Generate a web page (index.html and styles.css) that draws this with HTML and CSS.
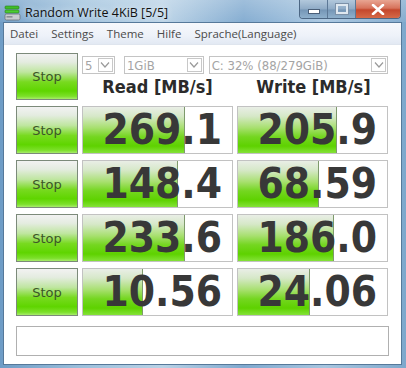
FILE: index.html
```html
<!DOCTYPE html>
<html>
<head>
<meta charset="utf-8">
<link rel="stylesheet" href="styles.css">
</head>
<body>
<div class="window">
  <div class="titlebar">
    <svg class="appicon" width="17" height="17" viewBox="0 0 17 17">
      <rect x="1" y="1" width="14" height="3" rx="1" fill="#3fbf2a" stroke="#2a7a1c" stroke-width="0.6"/>
      <rect x="1" y="5" width="14" height="3" rx="1" fill="#4ccc33" stroke="#2a7a1c" stroke-width="0.6"/>
      <rect x="1" y="9" width="15" height="6" rx="1.5" fill="#c9ccd0" stroke="#6d7278" stroke-width="0.8"/>
      <rect x="2.5" y="11" width="6" height="1.6" fill="#8a9096"/>
    </svg>
    <span class="title">Random Write 4KiB [5/5]</span>
    <div class="caption">
      <div class="cbtn minbtn"><span class="minglyph"></span></div>
      <div class="cbtn maxbtn"><span class="maxglyph"></span></div>
      <div class="cbtn closebtn">
        <svg width="14" height="11" viewBox="0 0 14 11"><path d="M2 1 L12 10 M12 1 L2 10" stroke="#fff" stroke-width="2.6" stroke-linecap="round"/></svg>
      </div>
    </div>
  </div>
  <div class="client">
    <div class="menubar">
      <span class="mi">Datei</span>
      <span class="mi">Settings</span>
      <span class="mi">Theme</span>
      <span class="mi">Hilfe</span>
      <span class="mi">Sprache(Language)</span>
    </div>
    <div class="main">
      <div class="grid">
        <div class="stop">Stop</div>
        <div class="header">
          <div class="selects">
            <div class="sel s1"><span class="sv">5</span><span class="arr"><svg width="10" height="6" viewBox="0 0 10 6"><path d="M1 0.5 L5 5 L9 0.5" fill="none" stroke="#9a9a9a" stroke-width="1.2"/></svg></span></div>
            <div class="sel s2"><span class="sv">1GiB</span><span class="arr"><svg width="10" height="6" viewBox="0 0 10 6"><path d="M1 0.5 L5 5 L9 0.5" fill="none" stroke="#9a9a9a" stroke-width="1.2"/></svg></span></div>
            <div class="sel s3"><span class="sv">C: 32% (88/279GiB)</span><span class="arr"><svg width="10" height="6" viewBox="0 0 10 6"><path d="M1 0.5 L5 5 L9 0.5" fill="none" stroke="#9a9a9a" stroke-width="1.2"/></svg></span></div>
          </div>
          <div class="labels">
            <span class="lbl">Read [MB/s]</span>
            <span class="lbl">Write [MB/s]</span>
          </div>
        </div>

        <div class="stop">Stop</div>
        <div class="res"><div class="bar" style="width:101px"></div><span class="num">269.1</span></div>
        <div class="res"><div class="bar" style="width:98px"></div><span class="num">205.9</span></div>

        <div class="stop">Stop</div>
        <div class="res"><div class="bar" style="width:94px"></div><span class="num">148.4</span></div>
        <div class="res"><div class="bar" style="width:80px"></div><span class="num">68.59</span></div>

        <div class="stop">Stop</div>
        <div class="res"><div class="bar" style="width:101px"></div><span class="num">233.6</span></div>
        <div class="res"><div class="bar" style="width:95px"></div><span class="num">186.0</span></div>

        <div class="stop">Stop</div>
        <div class="res"><div class="bar" style="width:59px"></div><span class="num">10.56</span></div>
        <div class="res"><div class="bar" style="width:71px"></div><span class="num">24.06</span></div>
      </div>
      <div class="status"></div>
    </div>
  </div>
</div>
</body>
</html>
```
FILE: styles.css
```css
html, body {
  margin: 0;
  padding: 0;
}
body {
  width: 406px;
  height: 368px;
  overflow: hidden;
}
.window {
  width: 406px;
  height: 368px;
  box-sizing: border-box;
  display: flex;
  flex-direction: column;
  background: linear-gradient(90deg, #6e9cc6 0%, #9cc0dc 20%, #b9d2e6 40%, #7fa9cf 60%, #a8c6e0 80%, #7ea8cc 100%);
}
.titlebar {
  height: 22px;
  display: flex;
  align-items: flex-start;
  background: linear-gradient(180deg, rgba(255,255,255,0.25), rgba(255,255,255,0.05));
}
.appicon {
  margin: 5px 0 0 4px;
}
.title {
  margin: 4px 0 0 4px;
  font-family: "Open Sans", "Noto Sans", sans-serif;
  font-size: 12.5px;
  color: #111;
  text-shadow: 0 0 6px rgba(255,255,255,0.9);
}
.caption {
  margin-left: auto;
  margin-right: 5px;
  display: flex;
  height: 18px;
  border: 1px solid #4c6784;
  border-top: none;
  border-radius: 0 0 4px 4px;
  overflow: hidden;
}
.cbtn {
  height: 18px;
  display: flex;
  align-items: center;
  justify-content: center;
}
.minbtn, .maxbtn {
  width: 27px;
  background: linear-gradient(180deg, #b2c8dc 0%, #8fabc6 50%, #7596b6 55%, #8eb0cc 100%);
  border-right: 1px solid #5c7896;
}
.minglyph {
  width: 10px;
  height: 3px;
  background: #fff;
  border: 1px solid #4a5f78;
  margin-top: 5px;
}
.maxglyph {
  width: 8px;
  height: 6px;
  border: 2px solid #dfe8f0;
  outline: 1px solid #7c91a8;
}
.closebtn {
  width: 44px;
  background: linear-gradient(180deg, #e8a592 0%, #d7735c 45%, #c4472c 55%, #d56a48 100%);
}
.client {
  flex: 1;
  margin: 0 4px 3px 3px;
  border: 1px solid #56799a;
  display: flex;
  flex-direction: column;
  background: #fff;
}
.menubar {
  height: 22px;
  display: flex;
  align-items: center;
  background: linear-gradient(180deg, #f6f8fc 0%, #eef2f9 60%, #e2e9f3 100%);
  border-bottom: 1px solid #dfe5ee;
  box-sizing: border-box;
  padding-left: 6px;
}
.mi {
  font-family: "Open Sans", "Noto Sans", sans-serif;
  font-size: 11.5px;
  color: #4a4a4a;
  margin-right: 13px;
}
.main {
  flex: 1;
  padding: 8px 0 0 12px;
}
.grid {
  display: grid;
  grid-template-columns: 62px 151px 151px;
  grid-template-rows: 47px 48px 48px 48px 48px;
  column-gap: 4px;
  row-gap: 6px;
}
.res:nth-child(3n) {
  margin-left: 1px;
}
.stop {
  box-sizing: border-box;
  border: 1px solid #7c8a7a;
  background: linear-gradient(180deg, #f2f2f2 0%, #e4ece0 18%, #bfe6a0 40%, #78da20 62%, #5fd500 82%, #7ce02a 94%, #a8ec6c 100%);
  display: flex;
  align-items: center;
  justify-content: center;
  font-family: "DejaVu Sans", sans-serif;
  font-size: 13px;
  color: #3c5628;
}
.header {
  grid-column: 2 / 4;
  display: flex;
  flex-direction: column;
}
.selects {
  display: flex;
  margin-top: 3px;
  height: 18px;
}
.sel {
  box-sizing: border-box;
  height: 18px;
  border: 1px solid #c4c4c4;
  display: flex;
  align-items: center;
  justify-content: space-between;
  background: #fff;
}
.s1 { width: 33px; }
.s2 { width: 80px; margin-left: 9px; }
.s3 { width: 180px; margin-left: 5px; }
.sv {
  font-family: "DejaVu Sans Condensed", "DejaVu Sans", sans-serif;
  font-stretch: condensed;
  font-size: 13px;
  color: #a4a4a4;
  padding-left: 2px;
}
.arr {
  box-sizing: border-box;
  width: 15px;
  height: 14px;
  margin-right: 1px;
  border: 1px solid #c8c8c8;
  display: flex;
  align-items: center;
  justify-content: center;
}
.labels {
  display: grid;
  grid-template-columns: 151px 151px;
  column-gap: 5px;
  margin-top: 2px;
}
.lbl {
  text-align: center;
  font-family: "DejaVu Sans Condensed", "DejaVu Sans", sans-serif;
  font-stretch: condensed;
  font-weight: bold;
  font-size: 18px;
  color: #2b2b2b;
}
.res {
  position: relative;
  box-sizing: border-box;
  border: 1px solid #c2c2c2;
  background: #fff;
  display: flex;
  align-items: center;
  justify-content: flex-end;
  overflow: hidden;
}
.bar {
  position: absolute;
  left: 0;
  top: 0;
  bottom: 0;
  background: linear-gradient(180deg, #e9eee6 0%, #d6e8c8 20%, #a8e070 45%, #74d620 65%, #5ed200 85%, #84e238 100%);
  border-right: 1px solid #7e9a6c;
}
.num {
  position: relative;
  font-family: "DejaVu Sans Condensed", "DejaVu Sans", sans-serif;
  font-stretch: condensed;
  font-weight: bold;
  font-size: 42px;
  line-height: 1;
  color: #383838;
  padding-right: 10px;
}
.status {
  margin-top: 10px;
  width: 373px;
  height: 30px;
  box-sizing: border-box;
  border: 1px solid #b0b0b0;
  background: #fff;
}
```
